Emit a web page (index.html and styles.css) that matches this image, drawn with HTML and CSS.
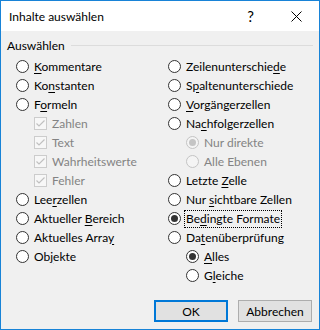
FILE: index.html
```html
<!DOCTYPE html>
<html lang="de">
<head>
  <meta charset="UTF-8" />
  <title>Inhalte auswählen</title>
  <link rel="stylesheet" href="styles.css">
</head>
<body>
  <div class="window">
    <div class="titlebar">
      <span class="title">Inhalte auswählen</span>
      <span class="help">?</span>
      <span class="close">
        <svg width="11" height="11" viewBox="0 0 11 11"><path d="M0.5 0.5 L10.5 10.5 M10.5 0.5 L0.5 10.5" stroke="#000" stroke-width="1" fill="none"/></svg>
      </span>
    </div>

    <div class="content">
      <div class="group-head"><span>Auswählen</span><div class="rule"></div></div>

      <div class="columns">
        <div class="col">
          <div class="opt"><span class="radio"></span><span class="label"><u>K</u>ommentare</span></div>
          <div class="opt"><span class="radio"></span><span class="label">Ko<u>n</u>stanten</span></div>
          <div class="opt"><span class="radio"></span><span class="label">F<u>o</u>rmeln</span></div>
          <div class="opt sub disabled"><span class="check"><svg width="11" height="11" viewBox="0 0 11 11"><path d="M1.5 5.5 L4 8 L9.5 2.5" stroke="#c0c0c0" stroke-width="1.2" fill="none"/></svg></span><span class="label">Zahlen</span></div>
          <div class="opt sub disabled"><span class="check"><svg width="11" height="11" viewBox="0 0 11 11"><path d="M1.5 5.5 L4 8 L9.5 2.5" stroke="#c0c0c0" stroke-width="1.2" fill="none"/></svg></span><span class="label">Text</span></div>
          <div class="opt sub disabled"><span class="check"><svg width="11" height="11" viewBox="0 0 11 11"><path d="M1.5 5.5 L4 8 L9.5 2.5" stroke="#c0c0c0" stroke-width="1.2" fill="none"/></svg></span><span class="label">Wahrheitswerte</span></div>
          <div class="opt sub disabled"><span class="check"><svg width="11" height="11" viewBox="0 0 11 11"><path d="M1.5 5.5 L4 8 L9.5 2.5" stroke="#c0c0c0" stroke-width="1.2" fill="none"/></svg></span><span class="label">Fehler</span></div>
          <div class="opt"><span class="radio"></span><span class="label">Lee<u>r</u>zellen</span></div>
          <div class="opt"><span class="radio"></span><span class="label">Aktueller <u>B</u>ereich</span></div>
          <div class="opt"><span class="radio"></span><span class="label">Aktuelles Arra<u>y</u></span></div>
          <div class="opt"><span class="radio"></span><span class="label">Ob<u>j</u>ekte</span></div>
        </div>

        <div class="col">
          <div class="opt"><span class="radio"></span><span class="label">Zeilenunterschie<u>d</u>e</span></div>
          <div class="opt"><span class="radio"></span><span class="label">S<u>p</u>altenunterschiede</span></div>
          <div class="opt"><span class="radio"></span><span class="label"><u>V</u>orgängerzellen</span></div>
          <div class="opt"><span class="radio"></span><span class="label">Na<u>c</u>hfolgerzellen</span></div>
          <div class="opt sub disabled"><span class="radio on"></span><span class="label">Nur direkte</span></div>
          <div class="opt sub disabled"><span class="radio"></span><span class="label">Alle Ebenen</span></div>
          <div class="opt"><span class="radio"></span><span class="label">Letzte <u>Z</u>elle</span></div>
          <div class="opt"><span class="radio"></span><span class="label">Nur <u>s</u>ichtbare Zellen</span></div>
          <div class="opt"><span class="radio on"></span><span class="label focus">Be<u>d</u>ingte Formate</span></div>
          <div class="opt"><span class="radio"></span><span class="label">Da<u>t</u>enüberprüfung</span></div>
          <div class="opt sub"><span class="radio on"></span><span class="label"><u>A</u>lles</span></div>
          <div class="opt sub"><span class="radio"></span><span class="label">G<u>l</u>eiche</span></div>
        </div>
      </div>

      <div class="buttons">
        <button class="btn default">OK</button>
        <button class="btn">Abbrechen</button>
      </div>
    </div>
  </div>
</body>
</html>
```

FILE: styles.css
```css
body {
  margin: 0;
  font-family: Lato, "Liberation Sans", sans-serif;
  font-size: 12px;
  color: #000;
}
.window {
  width: 320px;
  height: 330px;
  box-sizing: border-box;
  border: 1px solid #1883d7;
  background: #f0f0f0;
  display: flex;
  flex-direction: column;
}
.titlebar {
  height: 30px;
  background: #fff;
  display: flex;
  align-items: center;
  padding-left: 8px;
}
.title {
  flex: 1;
  font-size: 12px;
}
.help {
  font-size: 15px;
  margin-right: 37px;
}
.close {
  display: flex;
  margin-right: 17px;
}
.content {
  flex: 1;
  padding: 7px 7px 7px 6px;
  display: flex;
  flex-direction: column;
}
.group-head {
  height: 15px;
  display: flex;
  align-items: center;
  margin-bottom: 4px;
}
.rule {
  flex: 1;
  height: 1px;
  background: #dcdcdc;
  margin-left: 6px;
  margin-right: -1px;
}
.columns {
  display: grid;
  grid-template-columns: 152px 1fr;
  margin-left: 9px;
}
.opt {
  height: 19px;
  display: flex;
  align-items: center;
}
.opt.sub {
  padding-left: 18px;
}
.radio {
  width: 13px;
  height: 13px;
  box-sizing: border-box;
  border: 1px solid #333;
  border-radius: 50%;
  background: #fff;
  margin-right: 4px;
  display: flex;
  align-items: center;
  justify-content: center;
  flex: none;
}
.radio.on::after {
  content: "";
  width: 7px;
  height: 7px;
  border-radius: 50%;
  background: #333;
}
.disabled .radio {
  border-color: #c4c4c4;
  background: #f4f4f4;
}
.disabled .radio.on::after {
  background: #c4c4c4;
}
.check {
  width: 13px;
  height: 13px;
  box-sizing: border-box;
  border: 1px solid #cccccc;
  background: #f7f7f7;
  margin-right: 4px;
  display: flex;
  align-items: center;
  justify-content: center;
  flex: none;
}
.disabled .label {
  color: #838383;
}
.label {
  padding: 0 1px;
  line-height: 16px;
}
.label u {
  text-underline-offset: 2px;
}
.focus {
  outline: 1px dotted #000;
  outline-offset: 0;
}
.buttons {
  margin-top: auto;
  display: flex;
  justify-content: flex-end;
  gap: 10px;
}
.btn {
  width: 74px;
  height: 22px;
  box-sizing: border-box;
  background: #e1e1e1;
  border: 1px solid #adadad;
  font-family: inherit;
  font-size: 12px;
  color: #000;
  padding: 0;
}
.btn.default {
  border: 2px solid #0078d7;
}
```
